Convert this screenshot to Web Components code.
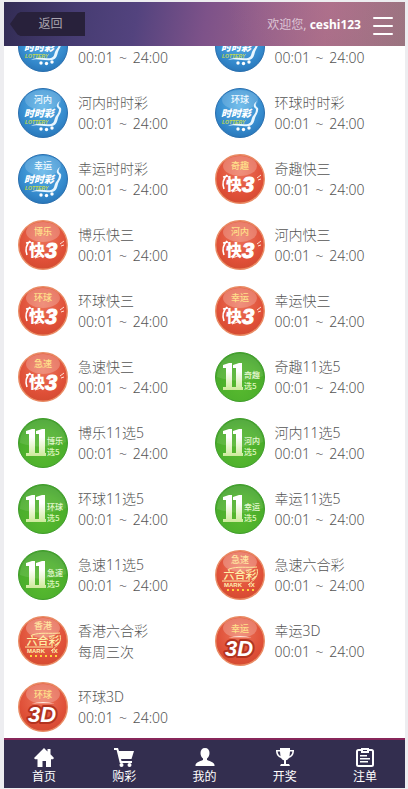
<!DOCTYPE html>
<html lang="zh-CN">
<head>
<meta charset="utf-8">
<meta name="viewport" content="width=device-width, initial-scale=1">
<title>购彩大厅</title>
<style>
html, body { height: 100%; margin: 0; }
body {
  box-sizing: border-box; padding: 2px 3px 1px 4px; background: #ededf0; color: #666;
  font: 14px/21px "Noto Sans", "Noto Sans CJK SC", sans-serif;
}
</style>
</head>
<body>
<lottery-app></lottery-app>
<script>
const attach = (el, html) => { el.attachShadow({ mode: 'open' }).innerHTML = html; };

class TopBar extends HTMLElement {
  connectedCallback() {
    attach(this, `<style>
      :host { display: flex; align-items: center; height: 44px; padding: 0 12px 0 6px; flex: none;
        background:
          radial-gradient(circle at 80% 0, rgba(190,120,150,.35), transparent 30%),
          linear-gradient(100deg, #322c54 0%, #463c72 18%, #53437e 33%, #7d5289 50%, #935f8a 64%, #a66c86 80%, #99747f 100%);
        position: relative; z-index: 1; }
      button { font: inherit; border: 0; margin: 0; cursor: pointer; }
      .back { width: 75px; height: 24px; padding: 0 0 0 6px; line-height: 24px; font-size: 12px;
        color: #aaa5b0; background: #28213b; text-align: center;
        clip-path: polygon(0 50%, 10% 6%, 14% 0, 100% 0, 100% 100%, 14% 100%, 10% 94%); }
      p { margin: 0 12px 0 auto; font-size: 12px; color: #ddc6d6; }
      ::slotted(b) { color: #fff; }
      .menu { display: flex; flex-direction: column; gap: 6px; padding: 4px 0 0; width: 20px; background: none; }
      .menu i { height: 2px; background: #fff; border-radius: 1px; }
    </style>
    <button class="back">返回</button>
    <p><slot></slot></p>
    <button class="menu" aria-label="菜单"><i></i><i></i><i></i></button>`);
  }
}
customElements.define('top-bar', TopBar);

const label = (text, y, fill) => text ? `<text x="25" y="${y}" font-size="9" text-anchor="middle" fill="${fill}">${text}</text>` : '';
const ballArt = {
  ssc: n => `
    <circle cx="25" cy="25" r="24.5" fill="url(#blue)" stroke="#2a6fae"/>
    <ellipse cx="25" cy="12" rx="18" ry="10" fill="#fff" opacity=".16"/>
    ${label(n, 15, '#f2faff')}
    <path d="M42 13c-4 3-4 6-1 8 0 5-3 6-4 9s-1 5-4 6c-7 1-12-2-20 2 7-2 12 1 21 0 5-1 5-5 6-8s4-6 3-10c-3-2-3-4-1-7z" fill="#e8f6ff"/>
    <text x="21" y="29" font-size="10" text-anchor="middle" font-style="italic" class="heavy" fill="#fff">时时彩</text>
    <text x="7" y="36" font-size="5" font-style="italic" class="latin" fill="#c4d94d">LOTTERY</text>
    <g fill="#fff"><circle cx="23" cy="41" r="1.7"/><circle cx="28.5" cy="41.5" r="1.7"/><circle cx="34" cy="40" r="1.7"/></g>`,
  k3: n => `
    <circle cx="25" cy="25" r="24.3" fill="url(#red)" stroke="#e98b64" stroke-width="1.4"/>
    <ellipse cx="25" cy="12" rx="17" ry="10" fill="#fff" opacity=".22"/>
    ${label(n, 15, '#ffe08a')}
    <path d="M12 21q-6 6-3 14M8 23l5-1" fill="none" stroke="#fff" stroke-width="1.6"/>
    <text x="11" y="36" font-size="16" class="heavy" fill="#fff">快</text>
    <text x="27" y="38" font-size="22" class="latin" font-style="italic" fill="#fff" stroke="#fff">3</text>
    <path d="M42 24l4-3M43 26l3-1M17 38l6-2" stroke="#ffe3d5" fill="none"/>`,
  x5: n => `
    <circle cx="25" cy="25" r="24.5" fill="url(#green)" stroke="#3f9c2b"/>
    <path d="M2 25a23 23 0 0 1 46-1c-12 5-28 7-46 1z" fill="#fff" opacity=".1"/>
    <path d="M8 13l6-2h3v24h2v3H8v-3h3V16H8zM18 13l6-2h3v24h1v3h-9v-3h2V16h-3z" fill="url(#cream)"/>
    <text x="29" y="26" font-size="8" fill="#e4f8d0">${n}</text>
    <text x="29" y="37" font-size="8" fill="#ddf6bc">选5</text>`,
  lhc: n => `
    <circle cx="25" cy="25" r="24.3" fill="url(#red)" stroke="#e98b64" stroke-width="1.4"/>
    <ellipse cx="25" cy="12" rx="17" ry="10" fill="#fff" opacity=".25"/>
    ${label(n, 13, '#ffe3a0')}
    <text x="25" y="29" font-size="11" text-anchor="middle" fill="#fff0a8">六合彩</text>
    <path d="M14 19c9-3 17-1 28-2M7 31h28M42 19c2 7-3 11-9 16" fill="none" stroke="#ffe9a0"/>
    <text x="9" y="37" font-size="6" class="latin" fill="#fff0b0">MARK</text>
    <text x="34" y="37" font-size="6" class="latin" fill="#fff0b0">IX</text>
    <path d="M12 40h28" stroke="#ffd23d" stroke-width="2" stroke-dasharray="2 3"/>`,
  d3: n => `
    <circle cx="25" cy="25" r="24.3" fill="url(#red)" stroke="#e98b64" stroke-width="1.4"/>
    <ellipse cx="25" cy="12" rx="17" ry="10" fill="#fff" opacity=".22"/>
    ${label(n, 16, '#ffe08a')}
    <path d="M13 22q12-4 24 0q-12-2-24 0z" fill="#ffe9dc"/>
    <g class="latin" font-size="22" font-style="italic" stroke-width="2" stroke-linejoin="round">
      <text x="10" y="40" fill="#fff" stroke="#b3331f" stroke-width="4" paint-order="stroke">3D</text>
    </g>`
};
class LotteryBall extends HTMLElement {
  connectedCallback() {
    attach(this, `<style>
      :host { display: block; width: 50px; height: 50px; flex: none; }
      svg { display: block; width: 100%; height: 100%; }
      text { font-family: "Noto Sans CJK SC", sans-serif; font-weight: 500; }
      .heavy { font-weight: 900; }
      .latin, .latin text { font-family: "Liberation Sans", sans-serif; font-weight: 700; }
    </style>
    <svg viewBox="0 0 50 50" aria-hidden="true"><defs>
      <radialGradient id="blue" cy=".35" r=".7"><stop offset="0" stop-color="#58b2e8"/><stop offset=".7" stop-color="#3489cc"/><stop offset="1" stop-color="#2672b4"/></radialGradient>
      <radialGradient id="red" cy=".35" r=".7"><stop offset="0" stop-color="#ec7258"/><stop offset=".7" stop-color="#df4f37"/><stop offset="1" stop-color="#d14a30"/></radialGradient>
      <radialGradient id="green" cy=".7" r=".8"><stop offset="0" stop-color="#57b92f"/><stop offset=".6" stop-color="#4bae2b"/><stop offset="1" stop-color="#3c982b"/></radialGradient>
      <linearGradient id="cream" x2="0" y2="1"><stop offset=".3" stop-color="#fff"/><stop offset="1" stop-color="#cdea9a"/></linearGradient>
    </defs>${ballArt[this.getAttribute('kind')](this.getAttribute('brand'))}</svg>`);
  }
}
customElements.define('lottery-ball', LotteryBall);

class LotteryItem extends HTMLElement {
  connectedCallback() {
    attach(this, `<style>
      :host { display: block; }
      a { display: flex; gap: 10px; padding: 10px 0 6px 10px; color: inherit; text-decoration: none; }
      .text { display: grid; grid-template-rows: 21px 21px; align-content: start; padding-top: 4px; white-space: nowrap; font-weight: 300; color: #555; }
    </style>
    <a href="#"><lottery-ball kind="${this.getAttribute('kind')}" brand="${this.getAttribute('brand')}"></lottery-ball>
    <span class="text"><slot name="name"></slot><slot name="time"></slot></span></a>`);
  }
}
customElements.define('lottery-item', LotteryItem);

const navIcons = {
  home: '<path d="M10 1l3.5 3.400V2h3v5.300L20 11l-1 1.200h-2V20h-5v-6H8.500v6H3.500v-7.800H1L0 11z"/>',
  cart: '<path d="M0 1h4l1 3h15l-2.500 8H7l.5 2H18v2H5.800L2.600 3H0z"/><circle cx="7.500" cy="18" r="2"/><circle cx="15.500" cy="18" r="2"/>',
  user: '<path d="M10 1c3 0 4.500 2 4.500 5 0 2.500-1 4.500-2.500 5.500v1.500c2 1 7 2 7.500 5v1H.5v-1c.5-3 5.500-4 7.500-5v-1.500C6.500 10.500 5.500 8.500 5.500 6 5.500 3 7 1 10 1z"/>',
  cup: '<path fill-rule="evenodd" d="M5 1h10v2h4c0 5-2 7-5 8-.8 1.200-1.600 2-3 2.300V17h3l1 2H5l1-2h3v-3.700C7.600 13 6.800 12.200 6 11 3 10 1 8 1 3h4zm0 3.500H2.600C3 7 4 8.500 5.500 9.200zm10 0-.5 4.700C16 8.500 17 7 17.400 4.500z"/>',
  list: '<path fill="none" stroke="#fff" stroke-width="2" d="M6 3H3.500Q2 3 2 4.500v13Q2 19 3.500 19h13q1.500 0 1.500-1.500v-13Q18 3 16.500 3H14M7 2h6v3H7z"/><path d="M5 8h7v1.500H5zM5 11h10v1.500H5zM5 14h8v1.500H5z"/>'
};
class NavTab extends HTMLElement {
  connectedCallback() {
    attach(this, `<style>
      :host { display: block; flex: 1; }
      a { display: flex; flex-direction: column; align-items: center; padding-top: 7px; color: #fff;
        font-size: 12px; line-height: 20px; text-decoration: none; }
      svg { width: 20px; height: 20px; fill: #fff; }
    </style>
    <a href="#"><svg viewBox="0 0 20 20" aria-hidden="true">${navIcons[this.getAttribute('icon')]}</svg><slot></slot></a>`);
  }
}
customElements.define('nav-tab', NavTab);

const games = [
  ['ssc', '', ''], ['ssc', '', ''],
  ['ssc', '河内', '时时彩'], ['ssc', '环球', '时时彩'],
  ['ssc', '幸运', '时时彩'], ['k3', '奇趣', '快三'],
  ['k3', '博乐', '快三'], ['k3', '河内', '快三'],
  ['k3', '环球', '快三'], ['k3', '幸运', '快三'],
  ['k3', '急速', '快三'], ['x5', '奇趣', '11选5'],
  ['x5', '博乐', '11选5'], ['x5', '河内', '11选5'],
  ['x5', '环球', '11选5'], ['x5', '幸运', '11选5'],
  ['x5', '急速', '11选5'], ['lhc', '急速', '六合彩'],
  ['lhc', '香港', '六合彩', '每周三次'], ['d3', '幸运', '3D'],
  ['d3', '环球', '3D']
];
class LotteryApp extends HTMLElement {
  connectedCallback() {
    attach(this, `<style>
      :host { display: flex; flex-direction: column; height: 100%; background: #fff; }
      main { flex: 1; min-height: 0; overflow: hidden; display: flex; flex-direction: column; justify-content: flex-end; }
      .grid { display: grid; grid-template-columns: 1fr 1fr; padding: 0 4px; flex: none; }
      .grid [slot] { display: block; }
      .to { margin: 0 2px; }
      nav { display: flex; flex: none; height: 48px; background: #332e4f; border-top: 2px solid #87265a; }
    </style>
    <top-bar>欢迎您, <b>ceshi123</b></top-bar>
    <main><div class="grid">${games.map(([kind, brand, game, time]) => `
      <lottery-item kind="${kind}" brand="${brand}">
        <span slot="name">${brand}${game}</span>
        <span slot="time">${time || '00:01 <span class="to">~</span> 24:00'}</span>
      </lottery-item>`).join('')}</div></main>
    <nav>
      <nav-tab icon="home">首页</nav-tab>
      <nav-tab icon="cart">购彩</nav-tab>
      <nav-tab icon="user">我的</nav-tab>
      <nav-tab icon="cup">开奖</nav-tab>
      <nav-tab icon="list">注单</nav-tab>
    </nav>`);
  }
}
customElements.define('lottery-app', LotteryApp);
</script>
</body>
</html>
